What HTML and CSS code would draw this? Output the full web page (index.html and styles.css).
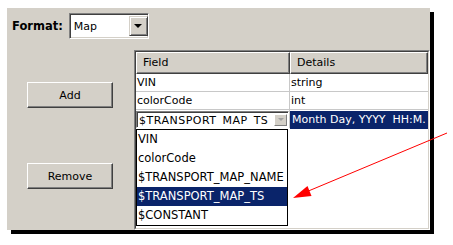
FILE: index.html
```html
<!DOCTYPE html>
<html>
<head>
<meta charset="utf-8">
<link rel="stylesheet" href="styles.css">
</head>
<body>
<div class="win">
  <div class="top">
    <span class="label">Format:</span>
    <div class="select">
      <span class="sel-text">Map</span>
      <span class="dd-btn"><span class="tri"></span></span>
    </div>
  </div>
  <div class="main">
    <div class="side">
      <button class="btn">Add</button>
      <button class="btn">Remove</button>
    </div>
    <div class="grid">
      <div class="grid-in">
        <div class="row head">
          <div class="hc c1">Field</div>
          <div class="hc c2">Details</div>
        </div>
        <div class="row">
          <div class="cell c1">VIN</div>
          <div class="cell c2">string</div>
        </div>
        <div class="row">
          <div class="cell c1">colorCode</div>
          <div class="cell c2">int</div>
        </div>
        <div class="row edit-row">
          <div class="cell c1 combo-cell">
            <div class="combo">
              <span class="combo-text">$TRANSPORT_MAP_TS</span>
              <span class="mini-btn"><span class="mini-tri"></span></span>
            </div>
          </div>
          <div class="cell c2 selected">Month Day, YYYY  HH:M.</div>
        </div>
        <ul class="popup">
          <li>VIN</li>
          <li>colorCode</li>
          <li>$TRANSPORT_MAP_NAME</li>
          <li class="active">$TRANSPORT_MAP_TS</li>
          <li>$CONSTANT</li>
        </ul>
      </div>
    </div>
  </div>
</div>
<svg class="arrow" width="453" height="245" viewBox="0 0 453 245">
  <line x1="447" y1="133" x2="306" y2="192" stroke="#ff0000" stroke-width="1"/>
  <polygon points="293,198 307.5,186 311.5,196" fill="#ff0000"/>
</svg>
</body>
</html>
```
FILE: styles.css
```css
html, body {
  margin: 0;
}
body {
  padding: 8px 0 0 7px;
  background: #fff;
  font-family: "DejaVu Sans", sans-serif;
  font-size: 11px;
  color: #000;
  width: 453px;
  height: 245px;
  box-sizing: border-box;
  overflow: hidden;
}
.win {
  width: 423px;
  height: 222px;
  background: #d4d0c8;
  box-shadow: 4px 4px 0 #000;
  display: flex;
  flex-direction: column;
}
.top {
  height: 42px;
  box-sizing: border-box;
  padding: 5px 0 0 5px;
  display: flex;
  align-items: flex-start;
}
.label {
  font-weight: bold;
  font-size: 11.5px;
  height: 26px;
  line-height: 26px;
}
.select {
  margin-left: 6px;
  width: 80px;
  height: 26px;
  box-sizing: border-box;
  border: 1px solid;
  border-color: #808080 #fff #fff #808080;
  box-shadow: inset 1px 1px 0 #404040, inset -1px -1px 0 #d4d0c8;
  background: #fff;
  display: flex;
  align-items: center;
}
.sel-text {
  flex: 1;
  padding-left: 4px;
}
.dd-btn {
  width: 19px;
  height: 20px;
  box-sizing: border-box;
  background: #d4d0c8;
  border: 1px solid;
  border-color: #d4d0c8 #404040 #404040 #d4d0c8;
  box-shadow: inset 1px 1px 0 #fff, inset -1px -1px 0 #808080;
  display: flex;
  align-items: center;
  justify-content: center;
}
.tri {
  width: 0;
  height: 0;
  border-left: 4px solid transparent;
  border-right: 4px solid transparent;
  border-top: 4px solid #000;
}
.main {
  flex: 1;
  display: flex;
}
.side {
  width: 127px;
  box-sizing: border-box;
  padding: 32px 0 0 20px;
  display: flex;
  flex-direction: column;
  align-items: flex-start;
  gap: 55px;
}
.btn {
  width: 86px;
  height: 26px;
  padding: 0;
  font-family: inherit;
  font-size: 11px;
  color: #000;
  background: #d4d0c8;
  border: 1px solid;
  border-color: #fff #404040 #404040 #fff;
  box-shadow: inset -1px -1px 0 #808080;
}
.grid {
  flex: 1;
  border: 1px solid;
  border-color: #808080 #fff #fff #808080;
}
.grid-in {
  position: relative;
  height: 100%;
  box-sizing: border-box;
  border: 1px solid;
  border-color: #404040 #d4d0c8 #d4d0c8 #404040;
  background: #fff;
}
.row {
  display: flex;
  height: 18px;
  box-sizing: border-box;
  border-bottom: 1px solid #c8c8c8;
}
.head {
  height: 22px;
  border-bottom: 0;
}
.hc {
  height: 22px;
  box-sizing: border-box;
  background: #d4d0c8;
  border: 1px solid;
  border-color: #fff #404040 #404040 #fff;
  box-shadow: inset -1px -1px 0 #808080;
  padding-left: 6px;
  line-height: 20px;
}
.c1 {
  width: 154px;
  flex: none;
}
.c2 {
  flex: 1;
}
.cell {
  line-height: 17px;
  padding-left: 1px;
  white-space: nowrap;
  overflow: hidden;
}
.cell.c1 {
  border-right: 1px solid #c8c8c8;
  box-sizing: border-box;
}
.edit-row {
  border-bottom: 0;
}
.combo-cell {
  padding: 1px 0 0 0;
  height: 18px;
  box-sizing: border-box;
}
.combo {
  height: 17px;
  box-sizing: border-box;
  border: 1px solid;
  border-color: #808080 #fff #fff #808080;
  box-shadow: inset 1px 1px 0 #404040;
  display: flex;
  align-items: center;
  overflow: hidden;
  background: #fff;
}
.combo-text {
  flex: 1;
  height: 12px;
  line-height: 14px;
  overflow: hidden;
  padding-left: 2px;
  align-self: flex-start;
  margin-top: 2px;
  letter-spacing: 0.5px;
}
.mini-btn {
  width: 13px;
  height: 12px;
  margin-right: 1px;
  box-sizing: border-box;
  background: #d4d0c8;
  border: 1px solid;
  border-color: #fff #808080 #808080 #fff;
  display: flex;
  align-items: center;
  justify-content: center;
}
.mini-tri {
  width: 0;
  height: 0;
  border-left: 3px solid transparent;
  border-right: 3px solid transparent;
  border-top: 3px solid #a0a0a0;
}
.selected {
  background: #0a246a;
  color: #fff;
  padding-left: 2px;
  height: 18px;
  margin-top: 1px;
  white-space: pre;
}
.popup {
  position: absolute;
  left: 0;
  top: 77px;
  width: 152px;
  margin: 0;
  padding: 0;
  list-style: none;
  background: #fff;
  border: 1px solid #000;
  box-sizing: border-box;
  font-size: 11.5px;
}
.popup li {
  height: 19px;
  line-height: 19px;
  padding-left: 1px;
  white-space: nowrap;
}
.popup li.active {
  background: #0a246a;
  color: #fff;
}
.arrow {
  position: absolute;
  left: 0;
  top: 0;
}
```
